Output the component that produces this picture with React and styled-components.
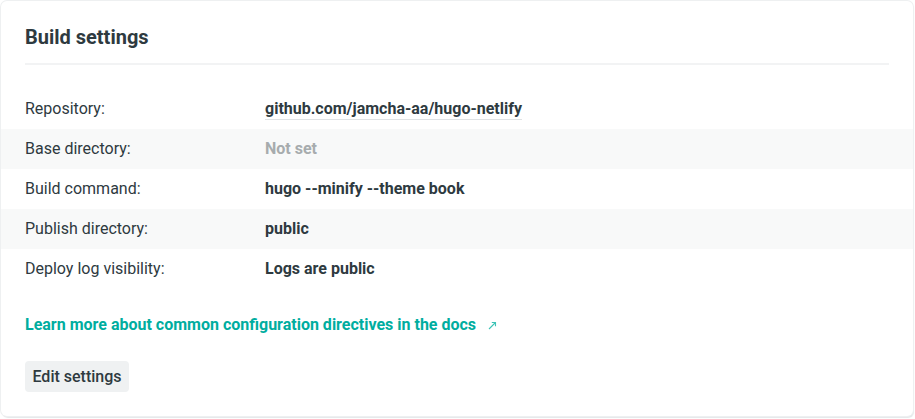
import React from "react";
import styled, { createGlobalStyle } from "styled-components";

const Global = createGlobalStyle`
  html, body { margin: 0; padding: 0; background: #ffffff; }
  body { font-family: Roboto, "Liberation Sans", sans-serif; -webkit-font-smoothing: antialiased; }
  * { box-sizing: border-box; }
`;

const Page = styled.div`
  padding: 1px 2px 3px 1px;
`;

const Card = styled.section`
  background: #fff;
  border-radius: 6px;
  box-shadow: 0 0 0 1px #eef0f1, 1px 2px 1px 0 #e4e7e9;
  padding: 24px 0 24px;
  color: #2e3a3f;
`;

const Header = styled.div`
  margin: 0 24px;
  padding-bottom: 14px;
  border-bottom: 2px solid #f2f3f4;
`;

const Title = styled.h2`
  margin: 0;
  font-size: 20px;
  line-height: 24px;
  font-weight: 700;
  color: #2e3a3f;
`;

const List = styled.dl`
  margin: 24px 0 0;
  display: flex;
  flex-direction: column;
`;

const Row = styled.div`
  display: grid;
  grid-template-columns: 240px 1fr;
  align-items: center;
  height: 40px;
  padding: 0 24px 2px;
  background: ${(p) => (p.$alt ? "#f8f9f9" : "transparent")};
`;

const Label = styled.dt`
  font-size: 16px;
  font-weight: 400;
  color: #2e3a3f;
  margin: 0;
`;

const Value = styled.dd`
  margin: 0;
  font-size: 16px;
  font-weight: 700;
  color: ${(p) => (p.$muted ? "#a7acae" : "#2e3a3f")};
`;

const Underlined = styled.span`
  border-bottom: 1px solid #dfe2e4;
  padding-bottom: 1px;
`;

const LinkRow = styled.div`
  margin: 26px 24px 0;
  line-height: 20px;
`;

const DocLink = styled.a`
  color: #00ad9f;
  font-size: 16px;
  font-weight: 700;
  text-decoration: none;
  display: inline-flex;
  align-items: center;
  gap: 12px;
`;

const Footer = styled.div`
  margin: 26px 24px 0;
`;

const Button = styled.button`
  font-family: inherit;
  font-size: 16px;
  font-weight: 500;
  color: #2e3a3f;
  background: #eff1f2;
  border: none;
  border-radius: 4px;
  height: 31px;
  width: 104px;
  padding: 0;
  cursor: pointer;
`;

const rows = [
  { label: "Repository:", value: "github.com/jamcha-aa/hugo-netlify", link: true },
  { label: "Base directory:", value: "Not set", muted: true },
  { label: "Build command:", value: "hugo --minify --theme book" },
  { label: "Publish directory:", value: "public" },
  { label: "Deploy log visibility:", value: "Logs are public" },
];

export default function App() {
  return (
    <Page>
      <Global />
      <Card>
        <Header>
          <Title>Build settings</Title>
        </Header>
        <List>
          {rows.map((r, i) => (
            <Row key={r.label} $alt={i % 2 === 1}>
              <Label>{r.label}</Label>
              <Value $muted={r.muted}>
                {r.link ? <Underlined>{r.value}</Underlined> : r.value}
              </Value>
            </Row>
          ))}
        </List>
        <LinkRow>
          <DocLink href="#">
            Learn more about common configuration directives in the docs
            <svg width="9" height="9" viewBox="0 0 9 9" fill="none" stroke="#3cc3b6" strokeWidth="1.1">
              <path d="M1 8 L7.5 1.5" />
              <path d="M3.8 1.5 H7.5 V5.2" />
            </svg>
          </DocLink>
        </LinkRow>
        <Footer>
          <Button>Edit settings</Button>
        </Footer>
      </Card>
    </Page>
  );
}
